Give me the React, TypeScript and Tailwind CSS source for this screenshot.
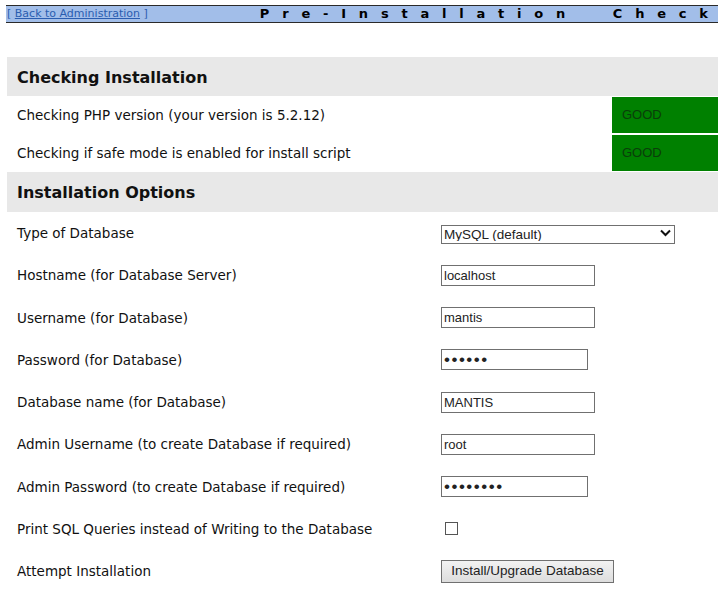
import React from "react";

const checks = [
  { label: "Checking PHP version (your version is 5.2.12)", result: "GOOD" },
  { label: "Checking if safe mode is enabled for install script", result: "GOOD" },
];

function TextField({ value, type = "text", width }: { value: string; type?: string; width: string }) {
  const pw = type === "password";
  return (
    <input
      type={type}
      defaultValue={value}
      readOnly
      className={`${width} h-[21px] border border-[#707070] bg-white px-[2px] text-[#222] outline-none ${
        pw ? "text-[17px] tracking-[1.5px]" : "text-[13px]"
      }`}
      style={{ fontFamily: '"Liberation Sans", Arial, sans-serif' }}
    />
  );
}

function FormRow({ label, children }: { label: string; children?: React.ReactNode }) {
  return (
    <div className="flex h-[42.25px] items-center">
      <div className="w-[434px] pl-[10px]">{label}</div>
      <div className="flex items-center">{children}</div>
    </div>
  );
}

export default function App() {
  return (
    <div
      className="min-h-[614px] w-[725px] bg-white pt-[5px] text-[13.5px] text-[#111]"
      style={{ fontFamily: '"DejaVu Sans", Verdana, sans-serif' }}
    >
      {/* top bar */}
      <div className="ml-[6px] flex h-[18px] w-[712px] items-center justify-between border-y border-[#2a2a2a] bg-[#a2bee9]">
        <div className="pl-[1px] text-[11px] text-[#2a5db0]">
          [ <span className="underline">Back to Administration</span> ]
        </div>
        <div className="pr-[10px] text-[13px] font-bold tracking-[12.8px] text-black">
          Pre-Installation{"\u00a0\u00a0"}Chec<span className="tracking-normal">k</span>
        </div>
      </div>

      <div className="ml-[7px] mt-[34px] w-[711px]">
        <div className="flex h-[39px] items-center bg-[#e8e8e8] pl-[10px] pt-[2px] text-[16px] font-bold">
          Checking Installation
        </div>
        {checks.map((c) => (
          <div key={c.label} className="flex h-[38px] items-center">
            <div className="flex-1 pl-[10px]">{c.label}</div>
            <div
              className="flex h-[36px] w-[106px] items-center bg-[#008000] pl-[10px] text-[13px] text-[#0a3d0a]"
              style={{ fontFamily: '"Liberation Sans", Arial, sans-serif' }}
            >
              {c.result}
            </div>
          </div>
        ))}
        <div className="flex h-[40px] items-center bg-[#e8e8e8] pl-[10px] pt-[2px] text-[16px] font-bold">
          Installation Options
        </div>

        <FormRow label="Type of Database">
          <div className="relative h-[19px] w-[234px]">
            <select
              defaultValue="mysql"
              className="h-[19px] w-full appearance-none border border-[#707070] bg-white pl-[2px] text-[13.5px] leading-none text-[#222] outline-none"
              style={{ fontFamily: '"Liberation Sans", Arial, sans-serif' }}
            >
              <option value="mysql">MySQL (default)</option>
            </select>
            <svg className="pointer-events-none absolute right-[4px] top-[5px]" width="11" height="8" viewBox="0 0 11 8">
              <path d="M1 1.5 L5.5 6 L10 1.5" fill="none" stroke="#111" strokeWidth="2" />
            </svg>
          </div>
        </FormRow>
        <FormRow label="Hostname (for Database Server)">
          <TextField value="localhost" width="w-[154px]" />
        </FormRow>
        <FormRow label="Username (for Database)">
          <TextField value="mantis" width="w-[154px]" />
        </FormRow>
        <FormRow label="Password (for Database)">
          <TextField value="mantis" type="password" width="w-[147px]" />
        </FormRow>
        <FormRow label="Database name (for Database)">
          <TextField value="MANTIS" width="w-[154px]" />
        </FormRow>
        <FormRow label="Admin Username (to create Database if required)">
          <TextField value="root" width="w-[154px]" />
        </FormRow>
        <FormRow label="Admin Password (to create Database if required)">
          <TextField value="password" type="password" width="w-[147px]" />
        </FormRow>
        <FormRow label="Print SQL Queries instead of Writing to the Database">
          <div className="ml-[4px] h-[13px] w-[13px] border border-[#555] bg-white" />
        </FormRow>
        <FormRow label="Attempt Installation">
          <button
            className="h-[23px] w-[173px] border border-[#707070] bg-gradient-to-b from-[#f2f2f2] to-[#dddddd] text-[13.5px] text-[#222]"
            style={{ fontFamily: '"Liberation Sans", Arial, sans-serif' }}
          >
            Install/Upgrade Database
          </button>
        </FormRow>
      </div>
    </div>
  );
}
